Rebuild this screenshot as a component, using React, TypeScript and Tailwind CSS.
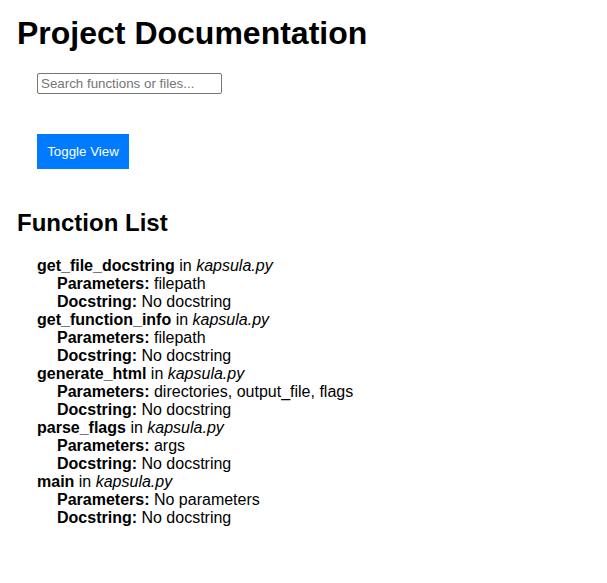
const functions = [
  { name: 'get_file_docstring', params: 'filepath' },
  { name: 'get_function_info', params: 'filepath' },
  { name: 'generate_html', params: 'directories, output_file, flags' },
  { name: 'parse_flags', params: 'args' },
  { name: 'main', params: 'No parameters' },
]

export default function App() {
  return (
    <div className="min-h-screen bg-white px-[17px] pt-[15px] font-['Liberation_Sans',Arial,sans-serif] text-black">
      <h1 className="text-[32px] font-bold leading-[37px]">Project Documentation</h1>

      <div className="mt-[21px] pl-5">
        <input
          type="text"
          placeholder="Search functions or files..."
          className="block h-[21px] w-[185px] rounded-[2px] border border-[#767676] px-[3px] text-[13.33px] placeholder:text-[#757575]"
        />
      </div>

      <div className="mt-[40px] pl-5">
        <button
          type="button"
          className="block h-[35px] w-[92px] bg-[#007bff] text-[13.33px] text-white"
        >
          Toggle View
        </button>
      </div>

      <h2 className="mt-[40px] text-2xl font-bold leading-[28px]">Function List</h2>

      <ul className="mt-[20px] pl-5 text-base leading-[18px]">
        {functions.map((fn) => (
          <li key={fn.name}>
            <div>
              <strong>{fn.name}</strong> in <em>kapsula.py</em>
            </div>
            <div className="pl-5">
              <strong>Parameters:</strong> {fn.params}
            </div>
            <div className="pl-5">
              <strong>Docstring:</strong> No docstring
            </div>
          </li>
        ))}
      </ul>
    </div>
  )
}
